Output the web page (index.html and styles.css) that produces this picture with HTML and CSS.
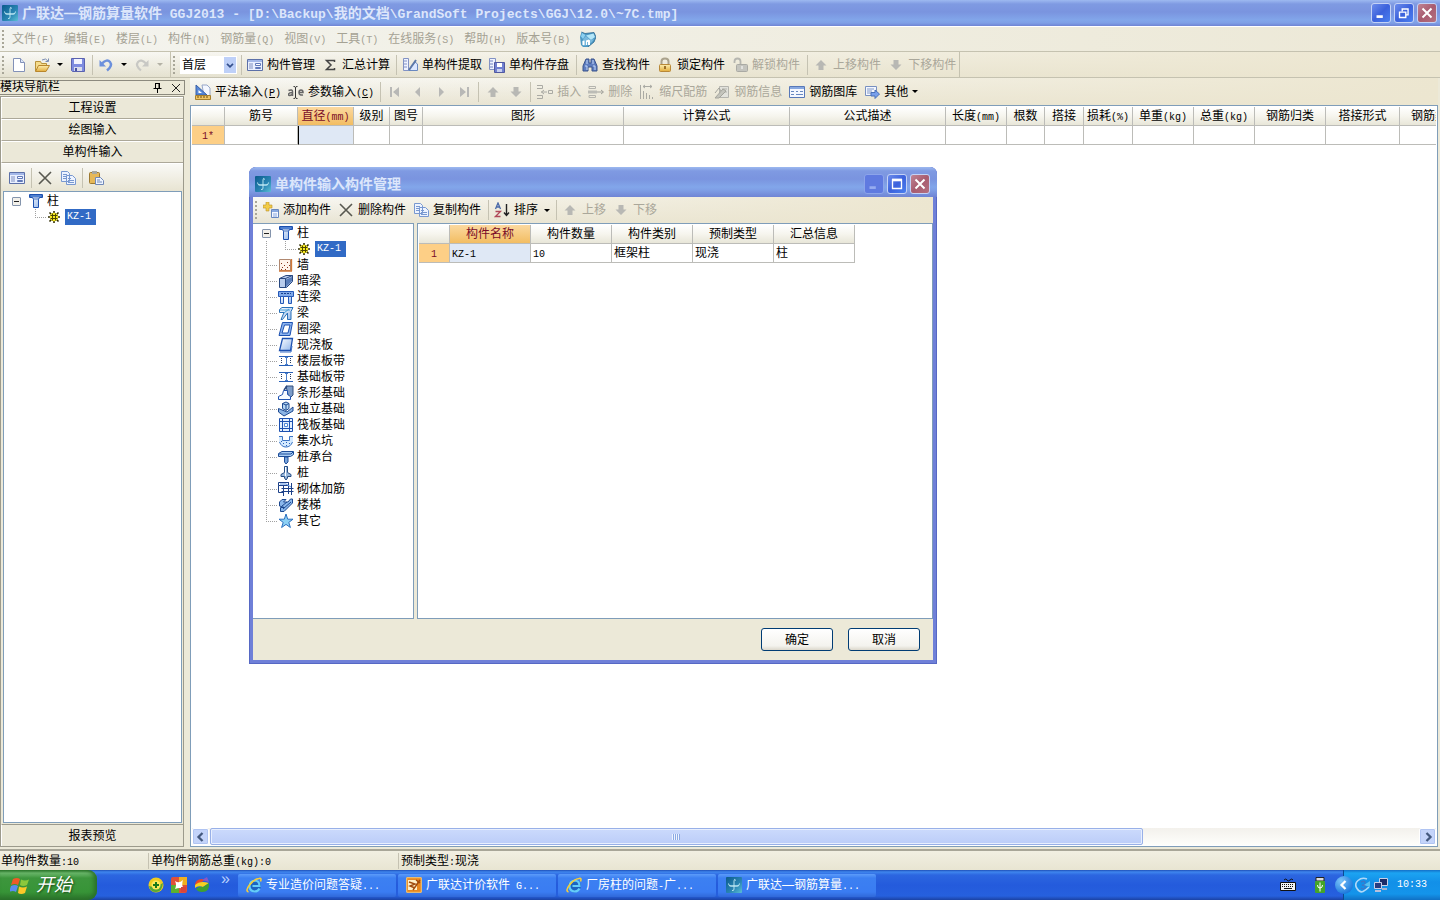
FILE: index.html
```html
<!DOCTYPE html>
<html lang="zh-CN">
<head>
<meta charset="utf-8">
<title>广联达—钢筋算量软件 GGJ2013</title>
<link rel="stylesheet" href="styles.css">
</head>
<body>
<svg class="defs" aria-hidden="true">
<defs>
<linearGradient id="gb" x1="0" y1="0" x2="1" y2="1"><stop offset="0" stop-color="#fff"/><stop offset="1" stop-color="#8fb4ea"/></linearGradient>
<linearGradient id="gy" x1="0" y1="0" x2="0" y2="1"><stop offset="0" stop-color="#fdeeb0"/><stop offset="1" stop-color="#e2ac3c"/></linearGradient>
<linearGradient id="gc" x1="0" y1="0" x2="1" y2="1"><stop offset="0" stop-color="#0a5a8c"/><stop offset=".6" stop-color="#2a86b4"/><stop offset="1" stop-color="#5cc0d4"/></linearGradient>
</defs>
<symbol id="logo" viewBox="0 0 16 16"><rect width="16" height="16" rx="1" fill="url(#gc)"/><path d="M10 3.500Q8 1 8 4v8q0 2-2 1.500M2.500 6.500Q2.500 9 5 9h6q2.500 0 2.500-2.500M3.500 9h9" fill="none" stroke="#c4ecf6" stroke-width=".9"/></symbol>
<symbol id="new" viewBox="0 0 16 16"><path d="M2.500 1.500h7l4 4v9h-11z" fill="#fff" stroke="#8291b8"/><path d="M9.500 1.500v4h4" fill="#dce6f8" stroke="#8291b8"/></symbol>
<symbol id="open" viewBox="0 0 16 16"><path d="M1.500 14V4.500h5l1 2h5V9" fill="#f5dc8c" stroke="#b8923c"/><path d="M1.500 14.500 4.500 8.500h11l-3.500 6z" fill="url(#gy)" stroke="#b8862c"/><path d="M8 3q4-2.500 6 1M14.500 1.500v3h-3" fill="none" stroke="#7c8eb4"/></symbol>
<symbol id="save" viewBox="0 0 16 16"><path d="M1.500 1.500h13v13h-12l-1-1z" fill="#7e8ce0" stroke="#5a62b0"/><path d="M4 2h8v5H4z" fill="#f2f4ff"/><path d="M4 10h8v4H4z" fill="#d9dcec"/><path d="M5 11h2v3H5z" fill="#4a54a4"/></symbol>
<symbol id="undo" viewBox="0 0 16 16"><path d="M4 6.500Q9 1.500 12 5t-3 8.500" fill="none" stroke="#6c90dc" stroke-width="2.500"/><path d="M1.500 3v6.500H8z" fill="#6c90dc"/></symbol>
<symbol id="redo" viewBox="0 0 16 16"><path d="M12 6.500Q7 1.500 4 5t3 8.500" fill="none" stroke="#c8c8c4" stroke-width="2.200"/><path d="M14.500 3v6.500H8z" fill="#c8c8c4"/></symbol>
<symbol id="form" viewBox="0 0 16 16"><path d="M.5 2.500h15v11H.5z" fill="#eaf0ff" stroke="#5c70a8"/><path d="M1 3h14v2H1z" fill="#a4b8e8"/><path d="M2 7h4M2 9h4M2 11h4" stroke="#8090c0"/><path d="M8.500 6.500h5v2h-5zM8.500 10.500h5v1h-5z" fill="#fff" stroke="#6078b8"/></symbol>
<symbol id="sigma" viewBox="0 0 16 16"><path d="M12.500 5V3.500h-8L9 8l-4.500 4.500h8V11" fill="none" stroke="#444" stroke-width="1.500"/></symbol>
<symbol id="extract" viewBox="0 0 16 16"><path d="M1.500 1.500h5v12h-5z" fill="#eef2ff" stroke="#8292c4"/><path d="M2 4h3M2 7h3M2 10h3" stroke="#8292c4"/><path d="M6.500 13.500 13 5l2.500 2v6.500z" fill="#dce8ff" stroke="#6888c0"/><path d="m7 13 7-10" stroke="#5c78a8" stroke-width="2"/></symbol>
<symbol id="store" viewBox="0 0 16 16"><path d="M.5 1.500h6v11h-6z" fill="#eef2ff" stroke="#8292c4"/><path d="M1 4h3M1 7h3M1 10h3" stroke="#6c80c0"/><path d="M5.500 5.500h10v10h-10z" fill="#7080d0" stroke="#5058a0"/><path d="M8 6h5v4H8z" fill="#fff"/><path d="M8 12h5v3H8z" fill="#c8d0f0"/></symbol>
<symbol id="find" viewBox="0 0 16 16"><path d="M4 2h3v4h2V2h3l3 7v5h-5v-4H6v4H1V9z" fill="#5f7ec0" stroke="#38528c"/><path d="M3 9h2v4M11 9h2v4M5 3v4M11 3v4" fill="none" stroke="#c4d8f8"/></symbol>
<symbol id="lock" viewBox="0 0 16 16"><path d="M4.500 8V4.500q0-3 3.500-3t3.500 3V8" fill="none" stroke="#aaa28c" stroke-width="2"/><rect x="2.500" y="7.500" width="11" height="7" rx="1" fill="url(#gy)" stroke="#b88838"/><path d="M8 9v3" stroke="#80500c" stroke-width="1.500"/></symbol>
<symbol id="unlock" viewBox="0 0 16 16"><path d="M2.500 6V4.500q0-3 3-3t3 3V8" fill="none" stroke="#b6b6b0" stroke-width="1.800"/><rect x="4.500" y="7.500" width="11" height="7" rx="1" fill="#c4c4be" stroke="#aaaaa4"/><path d="M10 9v3" stroke="#fff"/></symbol>
<symbol id="up" viewBox="0 0 16 16"><path d="M8 3 2.500 8.500h3V13h5V8.500h3z" fill="#b8b8b4"/></symbol>
<symbol id="down" viewBox="0 0 16 16"><path d="M8 13 2.500 7.500h3V3h5v4.500h3z" fill="#b8b8b4"/></symbol>
<symbol id="house" viewBox="0 0 16 16"><path d="M0 6 1.500 1 5 2.500 14 1.500 16 6l-2 5-6 5H3l-2-2z" fill="#4c98c4"/><path d="M1 5.500 2 2l3.500 2L3 8z" fill="#8cd0f0"/><path d="M6 4.500 13.500 2.500 15 6l-4 3z" fill="#b4e6f8"/><path d="m4 7 2-2 4 4 4-1-2 3-4 3-5 1-1-4z" fill="#78b8dc"/><path d="M2.500 10 4.500 9.500V14H2.500zM6 9.500l3-1 1 1V14H8v-3H7v3H6z" fill="#fff"/><path d="M1.500 1 5 2.500 14 1.500 16 6l-2 5-6 5" fill="none" stroke="#2c6890" stroke-width=".8"/></symbol>
<symbol id="tri" viewBox="0 0 16 16"><path d="M7 1h5l3 3v8H9z" fill="#f4f7ff" stroke="#96a6c8"/><path d="M1 1v10h11z" fill="#5888d8" stroke="#3860a8"/><path d="m3.500 6 3.500 3H3.500z" fill="#fff"/><path d="M.5 11.500h15v4H.5z" fill="#f0c464" stroke="#a8802c"/><path d="M3 12v2M6 12v2M9 12v2M12 12v2" stroke="#705010"/></symbol>
<symbol id="param" viewBox="0 0 16 16"><path d="M.5 6.500q4-1.500 4 1V12M4.500 8.500q-4 0-4 2t4 0M11 8.500h4q0-2.500-2-2.500t-2 2.500q0 3 4 2.500" fill="none" stroke="#666" stroke-width="1.500"/><path d="M5.500 2.500q2 0 2 1v10q0 1-2 1M9.500 2.500q-2 0-2 1v10q0 1 2 1" fill="none" stroke="#333"/></symbol>
<symbol id="first" viewBox="0 0 16 16"><path d="M3 3h2v10H3zM12 3v10L6 8z" fill="#b8b8b6"/></symbol>
<symbol id="prev" viewBox="0 0 16 16"><path d="M10 3v10L5 8z" fill="#b8b8b6"/></symbol>
<symbol id="next" viewBox="0 0 16 16"><path d="M6 3v10l5-5z" fill="#b8b8b6"/></symbol>
<symbol id="last" viewBox="0 0 16 16"><path d="M11 3h2v10h-2zM4 3v10l6-5z" fill="#b8b8b6"/></symbol>
<symbol id="insert" viewBox="0 0 16 16"><path d="M0 1.500h5.500v3H0M0 11.500h5.500v3H0M10 8H4M11.500 6.500h4v3h-4zM7 6 4.500 8 7 10" fill="none" stroke="#aaaaa4"/></symbol>
<symbol id="remove" viewBox="0 0 16 16"><path d="M1 2.500h6.500v2H1zM1 11.500h6.500v2H1z" fill="none" stroke="#b4b4ae"/><path d="M0 6.500h9v3H0z" fill="#bcbcb6"/><path d="M9 8h6M13 6l2.500 2L13 10" fill="none" stroke="#a0a09a"/></symbol>
<symbol id="scale" viewBox="0 0 16 16"><path d="M1.500 1v14M4 2.500h9M6 1 4 2.500 6 4M11 1l2 1.500L11 4M4.500 7v8M7.500 9v6M10.500 11v4M13.500 13v2" fill="none" stroke="#aaaaa4"/></symbol>
<symbol id="info" viewBox="0 0 16 16"><path d="M5.500 2.500h9v11h-9zM8 5h5M8 8h5" fill="#e2e2dc" stroke="#b4b4ae"/><path d="m1 14 8-9 3 2-7 7z" fill="#c4c4bc" stroke="#a4a49c"/><path d="m1 9 4-5 2 3" fill="none" stroke="#a4a49c"/></symbol>
<symbol id="lib" viewBox="0 0 16 16"><path d="M.5 2.500h15v11H.5z" fill="#f4f7ff" stroke="#5878b8"/><path d="M1 3h14v2H1z" fill="#88a8e0"/><path d="M2 7.500h3M2 10.500h3M7 7.500h2M11 7.500h3M7 10.500h7" stroke="#6888c0"/></symbol>
<symbol id="other" viewBox="0 0 16 16"><path d="M1.500 2.500h11v9h-11z" fill="#f4f7ff" stroke="#7890c0"/><path d="M3 5h7M3 7h5M3 9h4" stroke="#8098c8"/><path d="M7 8.500h4V6l4.500 4-4.500 4.500V12H7z" fill="#78a0ec" stroke="#4870b8"/></symbol>
<symbol id="cross" viewBox="0 0 16 16"><path d="m2 2 12 12M14 2 2 14" stroke="#585850" stroke-width="1.600"/></symbol>
<symbol id="copy" viewBox="0 0 16 16"><path d="M1.500 1.500h6l2 2v8h-8zM6.500 5.500h6l3 3v6h-9z" fill="#edf3ff" stroke="#7898d0"/><path d="M3 4.500h4M3 6.500h3M3 8.500h3M8 8.500h3M8 10.500h6M8 12.500h6" stroke="#7898d0"/></symbol>
<symbol id="paste" viewBox="0 0 16 16"><rect x="1.500" y="2.500" width="10" height="11" rx="1" fill="#e6b858" stroke="#9c7830"/><path d="M4 1h5v3H4z" fill="#a8a8a0"/><path d="M7.500 7.500h5l3 3v4h-8z" fill="#eef4ff" stroke="#7088b8"/><path d="M9 10h3M9 12h5" stroke="#7088b8"/></symbol>
<symbol id="add" viewBox="0 0 16 16"><path d="M3 0h3v3h3v3H6v3H3V6H0V3h3z" fill="#f2cc48" stroke="#b8902c" stroke-width=".6"/><path d="M8.500 7.500h7v8h-7z" fill="#f4f7ff" stroke="#6888c0"/><path d="M9 8h6v2H9z" fill="#88a8e0"/><path d="M10 12h4M10 14h4" stroke="#88a8e0"/></symbol>
<symbol id="sort" viewBox="0 0 16 16"><path d="m1.500 7 2.500-6 2.500 6M2.500 5h3" fill="none" stroke="#4868a8" stroke-width="1.300"/><path d="M1.500 9.500h5l-5 5h5" fill="none" stroke="#b04858" stroke-width="1.300"/><path d="M12.500 2v11M10 10.500l2.500 3 2.500-3" fill="none" stroke="#222" stroke-width="1.400"/></symbol>
<symbol id="col" viewBox="0 0 16 16"><path d="M1.500 1.500h13v3h-3l-1 2v8h-5v-8l-1-2h-3z" fill="url(#gb)" stroke="#1c50b0"/><path d="M2 2h12v2H2zM5 6h6" fill="#6c9ce4" stroke="#1c50b0" stroke-width=".7"/></symbol>
<symbol id="gear" viewBox="0 0 14 14"><path d="M7 1v12M1 7h12M2.500 2.500l9 9M11.500 2.500l-9 9" stroke="#2c2800" stroke-width="1.600"/><circle cx="7" cy="7" r="4.200" fill="#f8ea20"/><path d="M5.500 3.500v7M8.500 3.500v7M3.500 5.500h7M3.500 8.500h7" stroke="#4c4600"/></symbol>
<symbol id="wall" viewBox="0 0 16 16"><path d="M1.500 2.500h11v11h-11z" fill="#fff4ec" stroke="#b08870"/><path d="M13.500 2v12M1 14h13" stroke="#d07838" stroke-width="1.300"/><path d="M3 6.500h1M6 8.500h1M9 5.500h1M4 10.500h1M9 10.500h1M7 12.500h1M11 8.500h1M3 12.500h1" stroke="#88341c"/></symbol>
<symbol id="hbeam" viewBox="0 0 16 16"><path d="M1.500 5.500 8 2.500h6.500v6l-6 6h-7z" fill="#b8ccec" stroke="#284880"/><path d="M1.500 5.500h6v9M7.500 5.500l7-3" fill="none" stroke="#284880"/><path d="M8 6.500 14 4v4l-6 6z" fill="#587cb8"/></symbol>
<symbol id="lbeam" viewBox="0 0 16 16"><path d="M.5 2.500h15v5H.5z" fill="#80a8e8" stroke="#2458b8"/><path d="M3 4.500h10" stroke="#18408c" stroke-dasharray="2 1"/><path d="M2.500 7.500h3v7h-3zM10.500 7.500h3v7h-3z" fill="url(#gb)" stroke="#2458b8"/></symbol>
<symbol id="beam" viewBox="0 0 16 16"><path d="M1.500 4.500 4 2.500h11l-2 4v8H9.500V8l-5 6.500H3l3-7H1.500z" fill="url(#gb)" stroke="#2870b8"/><path d="M2 5h10M6 8l5-4" stroke="#48a0d8"/></symbol>
<symbol id="ring" viewBox="0 0 16 16"><path d="M4.500 1.500h10l-2.500 13H1z" fill="#8cb4f0" stroke="#1c50b0"/><path d="M6.500 4h5.500l-2 8H4z" fill="#fff" stroke="#1c50b0"/></symbol>
<symbol id="slab" viewBox="0 0 16 16"><path d="M4.500 1.500h10l-2 12H1.500z" fill="url(#gb)" stroke="#1c50b0" stroke-width="1.300"/><path d="M2 15h11l1-6" fill="none" stroke="#3c70c8"/></symbol>
<symbol id="band" viewBox="0 0 16 16"><path d="M1 3.500h14M1 12.500h14" stroke="#2860b8"/><path d="M3.500 5v6M12.500 5v6" stroke="#283c60" stroke-dasharray="1 1"/><path d="M7 4.500h3M7 11.500h3M8.500 5v6" stroke="#487cc8"/></symbol>
<symbol id="strip" viewBox="0 0 16 16"><path d="M8 1h7v9l-4 4z" fill="#7c9cc8" stroke="#34507c"/><path d="M5.500 5.500h4v4l3 2v3H.5v-3l4-2z" fill="#f4f9ff" stroke="#1c50b0"/><path d="M6 5 9 1" stroke="#284880" stroke-width="1.500"/></symbol>
<symbol id="pad" viewBox="0 0 16 16"><path d="M.5 7.500 9 11l6-5v4l-9 5-5.500-4z" fill="#8cb4e4" stroke="#1c4890"/><path d="M4.500 2.500 8 1l3 1.500v5l-3 2-3.500-2z" fill="#b8d8f4" stroke="#1c4890"/><path d="M8 4v5M4.500 2.500 8 4l3-1.500" fill="none" stroke="#1c4890"/></symbol>
<symbol id="raft" viewBox="0 0 16 16"><path d="M1.500 1.500h13v13h-13z" fill="#e4f0fe" stroke="#1c50b0"/><path d="M4.500 2v12M11.500 2v12M2 4.500h12M2 11.500h12" stroke="#1c50b0"/><path d="M6.500 6.500h3v3h-3z" fill="#fff" stroke="#5088d8"/></symbol>
<symbol id="pit" viewBox="0 0 16 16"><path d="M1 3.500h3.500v4h7v-4H15v5q-2 6-7 6t-7-6z" fill="#d4eaff"/><path d="M1 3.500h3.500v4h7v-4H15M1.500 9q2 5 6.500 5t6.500-5" fill="none" stroke="#3c74c4"/><path d="M3 8.500h1M5 10.500h1M8 9.500h1M11 10.500h1M8 12.500h1" stroke="#2860b8"/></symbol>
<symbol id="cap" viewBox="0 0 16 16"><path d="M.5 4.500 4 2.500h11.500v3l-3 2H.5z" fill="#a8ccf4" stroke="#1c4c98"/><path d="M6.500 8h3.500v5L8 15l-1.500-2z" fill="#78a4dc" stroke="#1c4c98"/><path d="M1 5h12l2-2" fill="none" stroke="#1c4c98"/></symbol>
<symbol id="pile" viewBox="0 0 16 16"><path d="M6.500 1.500h3v6l3.500 2v2H9.500V13L8 15l-1.500-2v-1.500H3v-2l3.500-2z" fill="#98b8dc" stroke="#244c84"/><path d="M7.500 2v9" stroke="#fff"/></symbol>
<symbol id="rebar" viewBox="0 0 16 16"><path d="M.5 1.500h10v3h-10zM.5 4.500v7h5M3.500 7.500h12M3.500 10.500h12M5.500 4v11M10.500 1v12M13.500 2v12" fill="none" stroke="#1c4088"/><path d="M2 3h6l5 3" fill="none" stroke="#5890e0"/></symbol>
<symbol id="stair" viewBox="0 0 16 16"><path d="M1.500 5 4 2.500h4L5.500 5H10l2.500-3h2v4L6 14.500H2.500v-4h4L1.500 9z" fill="#8cb8ec" stroke="#1c4890"/><path d="m4 9 5-4M5 12l8-7" stroke="#1c4890"/></symbol>
<symbol id="star" viewBox="0 0 16 16"><path d="m8 1 1.700 5.200H15l-4.200 3.200 1.600 5.100L8 11.400l-4.400 3.100 1.600-5.100L1 6.200h5.300z" fill="#8cd0f4" stroke="#2c70c0"/></symbol>
<symbol id="ie" viewBox="0 0 16 16"><circle cx="8.500" cy="9" r="6.500" fill="#1c64c0"/><path d="M13.500 11.500Q12 14.500 8.500 14.500 3.500 14 3.500 9t5-5.500q5 0 5 5.500H6.500" fill="none" stroke="#64ccf8" stroke-width="2.200"/><path d="M2.500 15Q-1 14 3.500 8T13 1.500q3-1 1.500 3" fill="none" stroke="#f4cc3c" stroke-width="1.600"/></symbol>
<symbol id="pricing" viewBox="0 0 16 16"><path d="M.7.700h14.600v14.600H.7z" fill="#e88820" stroke="#ffc868"/><path d="M2 3h9v10H2z" fill="#fff0c8"/><path d="m3 5 6 2-5 2 5 2M14 3 7 13M10 3l4 3" fill="none" stroke="#a04c10" stroke-width="1.400"/></symbol>
<symbol id="flag" viewBox="0 0 20 20"><path d="M3 4q4-2 7 0L8 10q-3-2-7 0z" fill="#ee5a28"/><path d="M11 4.500q4 2 8 0L17 10q-4 2-7 0z" fill="#8cc83c"/><path d="M1 11q4-2 7 0l-2 6q-3-2-7 0z" fill="#5a8cf0"/><path d="M9 11.500q4 2 8 0L15 18q-4 2-7 0z" fill="#fcc828"/></symbol>
<symbol id="q1" viewBox="0 0 16 16"><circle cx="8" cy="8" r="7.500" fill="#f0cc20"/><path d="M1 9q7 2 14-3-1 9-7 9t-7-6" fill="#58a838"/><circle cx="8" cy="8" r="4.500" fill="#fce858"/><path d="M8 5v6M5 8h6" stroke="#187818" stroke-width="2"/></symbol>
<symbol id="q2" viewBox="0 0 16 16"><rect width="16" height="16" rx="2" fill="#e05038"/><path d="M8 0h8v8H8z" fill="#f0b020"/><path d="M0 8h8v8H0z" fill="#5cb030"/><path d="M4 4q4 3 8-1-2 5 1 9-4-2-9 0 2-4 0-8" fill="#fff"/><path d="M10 10h5v5h-5z" fill="#d8443c"/></symbol>
<symbol id="q3" viewBox="0 0 16 16"><path d="M1 9q0-7 7-7l3 1z" fill="#e84828"/><path d="M1 8q5-5 14-2l-6 4q-5-2-8 1z" fill="#f8d020"/><path d="M2 12q3-3 7-2l6-4q1 9-7 9-4 0-6-3" fill="#40a030"/><path d="m8 3 5-3 2 5z" fill="#8858c8"/></symbol>
<symbol id="kbd" viewBox="0 0 16 16"><path d="M4 3q2-2 3 0t3 0 3 0" fill="none" stroke="#111"/><path d="M.5 5.500h15v8H.5z" fill="#f4f4f4" stroke="#111"/><path d="M2 7.500h12M2 9.500h12" stroke="#111" stroke-dasharray="1 1"/><path d="M4 11.500h8" stroke="#111"/></symbol>
<symbol id="usb" viewBox="0 0 16 16"><path d="M4 .5h8V4H4z" fill="#ddd" stroke="#222"/><rect x="3" y="4" width="10" height="12" rx="1" fill="#44a428"/><path d="M8 5.500v9M5.500 8q0 3 2.500 3t2.500-3" fill="none" stroke="#fff"/></symbol>
<symbol id="swirl" viewBox="0 0 16 16"><path d="M12 2Q7 0 3 3.500t-1 8 6 3 6-4.500" fill="none" stroke="#b0d8f8" stroke-width="1.600"/><path d="M6 5q4-2 4 1t-3 2q4 0 3 2.500T6 11" fill="none" stroke="#3c78c8" stroke-width="1.400"/><path d="m9 8 6-4v6z" fill="#58c0f0"/></symbol>
<symbol id="net" viewBox="0 0 16 16"><path d="M6.500 1.500h8v7h-8z" fill="#1c2c68" stroke="#c8d0e8"/><path d="M9 11h5v2H9z" fill="#a8b4d0"/><path d="M1.500 5.500h7v6h-7z" fill="#283c80" stroke="#c8d0e8"/><path d="M2 13h6v2H2z" fill="#b8c0dc"/></symbol>
<symbol id="chevl" viewBox="0 0 16 16"><path d="m9.500 4-4 4 4 4" fill="none" stroke="currentColor" stroke-width="2.300"/></symbol>
<symbol id="chevr" viewBox="0 0 16 16"><path d="m6.500 4 4 4-4 4" fill="none" stroke="currentColor" stroke-width="2.300"/></symbol>
<symbol id="min" viewBox="0 0 20 20"><path d="M5 14h7" stroke="currentColor" stroke-width="3"/></symbol>
<symbol id="restore" viewBox="0 0 20 20"><path d="M8 8V5.500h6.500V12H12M8 5.500h7M5 9h7v6H5zM5 9h7" fill="none" stroke="#fff" stroke-width="1.500"/></symbol>
<symbol id="max" viewBox="0 0 20 20"><path d="M5 5.500h10V15H5z" fill="none" stroke="#fff" stroke-width="1.500"/><path d="M4.500 5.500h11" stroke="#fff" stroke-width="3"/></symbol>
<symbol id="close" viewBox="0 0 20 20"><path d="m5 5 10 10M15 5 5 15" stroke="#fff" stroke-width="2.200"/></symbol>
<symbol id="pin" viewBox="0 0 12 12"><path d="M3.500 1v5.500M3 1.500h5M1.500 6.500h8M5.500 7v4M7 1v6" fill="none" stroke="#000"/><path d="M7.500 1v6" stroke="#000"/></symbol>
<symbol id="thinx" viewBox="0 0 12 12"><path d="m2 2 8 8M10 2l-8 8" stroke="#222"/></symbol>
</svg>

<header class="titlebar">
  <svg class="i"><use href="#logo"/></svg>
  <h1 class="title">广联达—钢筋算量软件<span class="l"> GGJ2013 - [D:\Backup\</span>我的文档<span class="l">\GrandSoft Projects\GGJ\12.0\~7C.tmp]</span></h1>
  <div class="winbtns">
    <button class="wb" aria-label="最小化"><svg><use href="#min"/></svg></button>
    <button class="wb" aria-label="还原"><svg><use href="#restore"/></svg></button>
    <button class="wb wb-close" aria-label="关闭"><svg><use href="#close"/></svg></button>
  </div>
</header>

<nav class="menubar">
  <span class="grip"></span>
  <button>文件<span class="l">(F)</span></button><button>编辑<span class="l">(E)</span></button><button>楼层<span class="l">(L)</span></button><button>构件<span class="l">(N)</span></button><button>钢筋量<span class="l">(Q)</span></button><button>视图<span class="l">(V)</span></button><button>工具<span class="l">(T)</span></button><button>在线服务<span class="l">(S)</span></button><button>帮助<span class="l">(H)</span></button><button>版本号<span class="l">(B)</span></button>
  <svg class="i"><use href="#house"/></svg>
</nav>

<div class="toolbar maintools">
  <div class="band files">
    <span class="grip"></span>
    <button class="tb" aria-label="新建"><svg class="i"><use href="#new"/></svg></button>
    <button class="tb" aria-label="打开"><svg class="i"><use href="#open"/></svg><span class="caret"></span></button>
    <button class="tb" aria-label="保存"><svg class="i"><use href="#save"/></svg></button>
    <span class="sep"></span>
    <button class="tb" aria-label="撤销"><svg class="i"><use href="#undo"/></svg><span class="caret"></span></button>
    <button class="tb off" aria-label="恢复"><svg class="i"><use href="#redo"/></svg><span class="caret"></span></button>
  </div>
  <div class="band">
    <span class="grip"></span>
    <span class="combo"><select aria-label="楼层"><option>首层</option></select><span class="drop"><svg><use href="#chevr"/></svg></span></span>
    <span class="sep"></span>
    <button class="tb"><svg class="i"><use href="#form"/></svg>构件管理</button>
    <button class="tb"><svg class="i"><use href="#sigma"/></svg>汇总计算</button>
    <span class="sep"></span>
    <button class="tb"><svg class="i"><use href="#extract"/></svg>单构件提取</button>
    <button class="tb"><svg class="i"><use href="#store"/></svg>单构件存盘</button>
    <span class="sep wide"></span>
    <button class="tb"><svg class="i"><use href="#find"/></svg>查找构件</button>
    <button class="tb"><svg class="i"><use href="#lock"/></svg>锁定构件</button>
    <button class="tb off"><svg class="i"><use href="#unlock"/></svg>解锁构件</button>
    <span class="sep wide"></span>
    <button class="tb off"><svg class="i"><use href="#up"/></svg>上移构件</button>
    <button class="tb off"><svg class="i"><use href="#down"/></svg>下移构件</button>
  </div>
</div>

<main class="main">
  <aside class="side">
    <div class="side-head"><h2>模块导航栏</h2><button aria-label="固定"><svg><use href="#pin"/></svg></button><button aria-label="关闭导航栏"><svg><use href="#thinx"/></svg></button></div>
    <div class="side-box">
      <button class="navbtn">工程设置</button>
      <button class="navbtn">绘图输入</button>
      <button class="navbtn">单构件输入</button>
      <div class="toolbar side-tools">
        <button class="tb" aria-label="构件管理"><svg class="i"><use href="#form"/></svg></button>
        <span class="sep"></span>
        <button class="tb" aria-label="删除"><svg class="i"><use href="#cross"/></svg></button>
        <button class="tb" aria-label="复制"><svg class="i"><use href="#copy"/></svg></button>
        <span class="sep"></span>
        <button class="tb" aria-label="粘贴"><svg class="i"><use href="#paste"/></svg></button>
      </div>
      <ul class="tree side-tree">
        <li><span class="exp"></span><svg class="i"><use href="#col"/></svg>柱</li>
        <li class="sub"><span class="elbow"></span><svg class="i"><use href="#gear"/></svg><span class="sel l">KZ-1</span></li>
      </ul>
      <button class="navbtn navlast">报表预览</button>
    </div>
  </aside>

  <section class="work">
    <div class="toolbar worktools">
      <button class="tb"><svg class="i"><use href="#tri"/></svg><span>平法输入<span class="l">(<u>P</u>)</span></span></button>
      <button class="tb"><svg class="i"><use href="#param"/></svg><span>参数输入<span class="l">(<u>C</u>)</span></span></button>
      <span class="sep"></span>
      <button class="tb off" aria-label="首条"><svg class="i"><use href="#first"/></svg></button>
      <button class="tb off" aria-label="上一条"><svg class="i"><use href="#prev"/></svg></button>
      <button class="tb off" aria-label="下一条"><svg class="i"><use href="#next"/></svg></button>
      <button class="tb off" aria-label="末条"><svg class="i"><use href="#last"/></svg></button>
      <span class="sep"></span>
      <button class="tb off" aria-label="上移"><svg class="i"><use href="#up"/></svg></button>
      <button class="tb off" aria-label="下移"><svg class="i"><use href="#down"/></svg></button>
      <span class="sep"></span>
      <button class="tb off"><svg class="i"><use href="#insert"/></svg>插入</button>
      <button class="tb off"><svg class="i"><use href="#remove"/></svg>删除</button>
      <button class="tb off"><svg class="i"><use href="#scale"/></svg>缩尺配筋</button>
      <button class="tb off"><svg class="i"><use href="#info"/></svg>钢筋信息</button>
      <button class="tb"><svg class="i"><use href="#lib"/></svg>钢筋图库</button>
      <button class="tb"><svg class="i"><use href="#other"/></svg>其他<span class="caret near"></span></button>
    </div>
    <div class="sheet">
      <div class="sheet-view">
        <table class="grid maingrid">
          <colgroup><col class="w33"><col class="w73"><col class="w56"><col class="w36"><col class="w33"><col class="w201"><col class="w166"><col class="w156"><col class="w61"><col class="w38"><col class="w39"><col class="w49"><col class="w61"><col class="w61"><col class="w71"><col class="w74"><col class="w71"></colgroup>
          <thead><tr><th></th><th>筋号</th><th class="hot">直径<span class="l">(mm)</span></th><th>级别</th><th>图号</th><th>图形</th><th>计算公式</th><th>公式描述</th><th>长度<span class="l">(mm)</span></th><th>根数</th><th>搭接</th><th>损耗<span class="l">(%)</span></th><th>单重<span class="l">(kg)</span></th><th>总重<span class="l">(kg)</span></th><th>钢筋归类</th><th>搭接形式</th><th>钢筋类型</th></tr></thead>
          <tbody><tr><th class="rowno"><span class="l">1*</span></th><td></td><td class="cur caretcell"></td><td></td><td></td><td></td><td></td><td></td><td></td><td></td><td></td><td></td><td></td><td></td><td></td><td></td><td></td></tr></tbody>
        </table>
      </div>
      <div class="hscroll">
        <button class="sbtn" aria-label="向左滚动"><svg class="i"><use href="#chevl"/></svg></button>
        <div class="track"><div class="thumb"><span class="ridges"></span></div></div>
        <button class="sbtn" aria-label="向右滚动"><svg class="i"><use href="#chevr"/></svg></button>
      </div>
    </div>
  </section>
</main>

<footer class="status">
  <span class="st1">单构件数量<span class="l">:10</span></span>
  <span class="st2">单构件钢筋总重<span class="l">(kg):0</span></span>
  <span class="st3">预制类型<span class="l">:</span>现浇</span>
</footer>

<div class="taskbar">
  <button class="start"><svg><use href="#flag"/></svg>开始</button>
  <div class="quick">
    <svg class="i"><use href="#q1"/></svg><svg class="i"><use href="#q2"/></svg><svg class="i"><use href="#q3"/></svg><span class="more">»</span>
  </div>
  <div class="tasks">
    <button class="task"><svg class="i"><use href="#ie"/></svg><span>专业造价问题答疑<span class="l">...</span></span></button>
    <button class="task"><svg class="i"><use href="#pricing"/></svg><span>广联达计价软件<span class="l"> G...</span></span></button>
    <button class="task"><svg class="i"><use href="#ie"/></svg><span>厂房柱的问题<span class="l">-</span>广<span class="l">...</span></span></button>
    <button class="task"><svg class="i"><use href="#logo"/></svg><span>广联达—钢筋算量<span class="l">...</span></span></button>
  </div>
  <div class="lang"><svg class="i"><use href="#kbd"/></svg><svg class="i"><use href="#usb"/></svg></div>
  <div class="tray">
    <button class="hide" aria-label="隐藏图标"><svg class="i"><use href="#chevl"/></svg></button>
    <svg class="i"><use href="#swirl"/></svg><svg class="i"><use href="#net"/></svg>
    <time class="l">10:33</time>
  </div>
</div>

<section class="dialog" role="dialog" aria-labelledby="dt">
  <div class="dlg-title">
    <svg class="i"><use href="#logo"/></svg><h2 id="dt" class="title">单构件输入构件管理</h2>
    <div class="winbtns">
      <button class="wb wb-off" aria-label="最小化"><svg><use href="#min"/></svg></button>
      <button class="wb" aria-label="最大化"><svg><use href="#max"/></svg></button>
      <button class="wb wb-close" aria-label="关闭"><svg><use href="#close"/></svg></button>
    </div>
  </div>
  <div class="dlg-body">
    <div class="toolbar dlg-tools">
      <span class="grip"></span>
      <button class="tb"><svg class="i"><use href="#add"/></svg>添加构件</button>
      <button class="tb"><svg class="i"><use href="#cross"/></svg>删除构件</button>
      <button class="tb"><svg class="i"><use href="#copy"/></svg>复制构件</button>
      <span class="sep wide"></span>
      <button class="tb"><svg class="i"><use href="#sort"/></svg>排序<span class="caret"></span></button>
      <span class="sep"></span>
      <button class="tb off"><svg class="i"><use href="#up"/></svg>上移</button>
      <button class="tb off"><svg class="i"><use href="#down"/></svg>下移</button>
    </div>
    <div class="panes">
      <ul class="tree dlg-tree">
        <li><span class="exp"></span><svg class="i"><use href="#col"/></svg>柱</li>
        <li class="sub"><span class="trunk"></span><span class="elbow"></span><svg class="i"><use href="#gear"/></svg><span class="sel l">KZ-1</span></li>
        <li><span class="branch"></span><svg class="i"><use href="#wall"/></svg>墙</li>
        <li><span class="branch"></span><svg class="i"><use href="#hbeam"/></svg>暗梁</li>
        <li><span class="branch"></span><svg class="i"><use href="#lbeam"/></svg>连梁</li>
        <li><span class="branch"></span><svg class="i"><use href="#beam"/></svg>梁</li>
        <li><span class="branch"></span><svg class="i"><use href="#ring"/></svg>圈梁</li>
        <li><span class="branch"></span><svg class="i"><use href="#slab"/></svg>现浇板</li>
        <li><span class="branch"></span><svg class="i"><use href="#band"/></svg>楼层板带</li>
        <li><span class="branch"></span><svg class="i"><use href="#band"/></svg>基础板带</li>
        <li><span class="branch"></span><svg class="i"><use href="#strip"/></svg>条形基础</li>
        <li><span class="branch"></span><svg class="i"><use href="#pad"/></svg>独立基础</li>
        <li><span class="branch"></span><svg class="i"><use href="#raft"/></svg>筏板基础</li>
        <li><span class="branch"></span><svg class="i"><use href="#pit"/></svg>集水坑</li>
        <li><span class="branch"></span><svg class="i"><use href="#cap"/></svg>桩承台</li>
        <li><span class="branch"></span><svg class="i"><use href="#pile"/></svg>桩</li>
        <li><span class="branch"></span><svg class="i"><use href="#rebar"/></svg>砌体加筋</li>
        <li><span class="branch"></span><svg class="i"><use href="#stair"/></svg>楼梯</li>
        <li><span class="branch end"></span><svg class="i"><use href="#star"/></svg>其它</li>
      </ul>
      <div class="dlg-sheet">
        <table class="grid dlggrid">
          <colgroup><col class="w31"><col class="w81"><col class="w81"><col class="w81"><col class="w81"><col class="w81"></colgroup>
          <thead><tr><th></th><th class="hot">构件名称</th><th>构件数量</th><th>构件类别</th><th>预制类型</th><th>汇总信息</th></tr></thead>
          <tbody><tr><th class="rowno"><span class="l">1</span></th><td class="cur"><span class="l">KZ-1</span></td><td><span class="l">10</span></td><td>框架柱</td><td>现浇</td><td>柱</td></tr></tbody>
        </table>
      </div>
    </div>
    <div class="dlg-foot"><button class="push">确定</button><button class="push">取消</button></div>
  </div>
</section>
</body>
</html>
```
FILE: styles.css
```css
* { box-sizing: border-box; }
body {
  margin: 0; height: 100vh; display: flex; flex-direction: column; position: relative; overflow: hidden;
  background: #ece9d8; color: #000;
  font: 12px/16px "Liberation Sans", "Noto Sans CJK SC", sans-serif;
}
button { font: inherit; color: inherit; background: none; border: 0; padding: 0; margin: 0; white-space: nowrap; }
h1, h2, ul { margin: 0; padding: 0; font: inherit; list-style: none; }
svg { display: block; flex: none; }
.defs { position: absolute; width: 0; height: 0; }
.i { width: 16px; height: 16px; }
.l { font-family: "Liberation Mono", monospace; font-size: 10px; line-height: 10px; white-space: pre; }

/* title bars */
.titlebar, .dlg-title {
  display: flex; align-items: center; flex: none;
  background: linear-gradient(#9db9f0 0, #7f9ae2 4px, #7a94df 12px, #82a6ea 20px, #7f9fe6 23px, #6f84d4 100%);
}
.titlebar { height: 26px; padding: 0 3px 0 2px; }
.title { flex: 1; margin-left: 4px; font-size: 14px; line-height: 20px; font-weight: bold; color: #dce6fb; white-space: nowrap; }
.title .l { font-size: 13px; }
.winbtns { display: flex; gap: 3px; }
.wb { width: 20px; height: 20px; border: 1px solid #c4d2f6; border-radius: 3px; color: #fff; background: linear-gradient(135deg, #6c8cec, #3c62dc 50%, #4a80f0); }
.wb svg { width: 18px; height: 18px; }
.wb-close { background: linear-gradient(135deg, #c08494, #a85c70 50%, #b47080); }
.wb-off { color: #96acf0; border-color: #8ca4ea; background: #5f7ae0; }

/* menu and tool bars */
.grip { width: 2px; height: 18px; flex: none; background: repeating-linear-gradient(#a8a698 0 2px, transparent 2px 4px); }
.menubar {
  height: 26px; flex: none; display: flex; align-items: center; gap: 10px; padding-left: 2px; color: #a5a294;
  border-top: 1px solid #fff; border-bottom: 1px solid #c5c2b0; background: linear-gradient(90deg, #f4f4ef, #ece8d6);
}
.menubar .grip { margin-right: -2px; }
.toolbar { display: flex; align-items: center; flex: none; }
.maintools { height: 26px; border-bottom: 1px solid #c5c2b0; background: linear-gradient(90deg, transparent, #ece6d0), linear-gradient(#f9f9f6, #e4e1d0); }
.band { height: 100%; display: flex; align-items: center; padding-left: 2px; border-right: 1px solid #c5c2b0; }
.files { width: 171px; }
.tb { display: flex; align-items: center; gap: 4px; height: 22px; padding: 0 3px 0 4px; }
.off, .off .l { color: #aaa79a; }
.sep { width: 1px; height: 20px; flex: none; margin: 0 1px 0 3px; background: #c5c2b2; }
.sep.wide { margin: 0 1px 0 4px; }
.caret { border: 3px solid transparent; border-top-color: #000; border-bottom: 0; margin-left: 2px; }
.off .caret { border-top-color: #b4b2a6; }
.caret.near { margin-left: 0; }
.files .grip { margin-right: 3px; }
.files .caret { margin-left: 3px; }
.combo { position: relative; width: 57px; height: 18px; margin: 0 1px 0 5px; }
.combo select { width: 100%; height: 100%; border: 0; padding: 0 2px; appearance: none; background: #fff; font: inherit; line-height: 16px; color: #000; }
.drop { position: absolute; right: 1px; top: 1px; width: 12px; height: 16px; background: #bed0f8; color: #35508c; pointer-events: none; }
.drop svg { width: 12px; height: 16px; transform: rotate(90deg); }

/* main split */
.main { flex: 1; min-height: 0; display: flex; gap: 5px; }
.side { width: 185px; flex: none; display: flex; flex-direction: column; padding-top: 2px; }
.side-head { height: 15px; display: flex; align-items: center; gap: 6px; padding-right: 2px; border: 1px solid #8c8a7e; border-left: 0; }
.side-head h2 { flex: 1; line-height: 13px; }
.side-head svg { width: 12px; height: 12px; }
.side-box { flex: 1; min-height: 0; display: flex; flex-direction: column; margin: 1px 1px 2px 0; border: 1px solid #9c9a8c; }
.navbtn { height: 22px; flex: none; border-bottom: 1px solid #aca899; border-top: 1px solid #fff; border-left: 1px solid #fff; background: #ebe8d8; }
.navlast { border-bottom: 0; border-top-color: #9c9a8c; }
.side-tools { height: 28px; padding-left: 4px; background: linear-gradient(#f9f9f6, #e8e4d2); border-top: 1px solid #fff; }
.side-tools .sep { margin-right: 1px; }
.side-tree { flex: 1; margin: 0 1px 1px 2px; background: #fff; border: 1px solid #7f9db9; padding: 1px 0 0 8px; }
.work { flex: 1; min-width: 0; display: flex; flex-direction: column; background: #ece9d8; padding: 0 2px 2px 0; }
.worktools { height: 27px; padding-left: 1px; background: linear-gradient(90deg, transparent, #ece6d0), linear-gradient(#f9f9f6, #e8e4d4); }
.worktools .sep { margin-right: 2px; }
.sheet { flex: 1; min-height: 0; display: flex; flex-direction: column; background: #fff; border: 1px solid #7f9db9; padding: 1px; }
.sheet-view { flex: 1; overflow: hidden; }

/* grids */
.grid { border-collapse: separate; border-spacing: 0; table-layout: fixed; }
.grid th, .grid td { height: 19px; padding: 0; border-right: 1px solid #bcbcb8; border-bottom: 1px solid #bcbcb8; font-weight: normal; line-height: 16px; white-space: nowrap; overflow: hidden; }
.grid thead th { background: linear-gradient(#fff, #f6f5ee 50%, #e8e6d8); }
.grid td { padding-left: 2px; }
.grid thead .hot { color: #7a0c28; background: linear-gradient(#fbd9a0, #f2bd62); }
.grid .rowno { color: #7a0c28; background: #fdcf86; }
.grid .cur { background: #dfe8f5; }
.grid .caretcell { border-left: 1px solid #000; }
.maingrid { width: 1279px; }
.dlggrid { width: 436px; }
.w31 { width: 31px; } .w33 { width: 33px; } .w36 { width: 36px; } .w38 { width: 38px; } .w39 { width: 39px; }
.w49 { width: 49px; } .w56 { width: 56px; } .w61 { width: 61px; } .w71 { width: 71px; } .w73 { width: 73px; }
.w74 { width: 74px; } .w81 { width: 81px; } .w156 { width: 156px; } .w166 { width: 166px; } .w201 { width: 201px; }

/* horizontal scroll bar */
.hscroll { height: 17px; flex: none; display: flex; gap: 1px; background: linear-gradient(#f3f1ec, #fefefb); }
.sbtn { width: 17px; border: 1px solid #fff; border-radius: 2px; background: #c4d4fa; color: #44597e; box-shadow: inset 0 0 0 1px #b0c4f2; }
.track { flex: 1; display: flex; }
.thumb { width: 77.2%; display: flex; align-items: center; justify-content: center; border: 1px solid #98b0e8; border-radius: 2px; background: linear-gradient(#cbdafc, #bccdf8); box-shadow: inset 0 0 0 1px #e8effe; }
.ridges { width: 8px; height: 6px; background: repeating-linear-gradient(90deg, #eef4fe 0 1px, #8caae4 1px 2px); }

/* trees */
.tree li { height: 16px; display: flex; align-items: center; white-space: nowrap; }
.tree .i { margin-right: 3px; }
.exp { width: 9px; height: 9px; margin-right: 7px; border: 1px solid #8494ac; border-radius: 1px; background: linear-gradient(#222, #222) 1px 3px / 5px 1px no-repeat #f2f0ea; }
.elbow { width: 12px; height: 16px; background: repeating-linear-gradient(#a0a0a0 0 1px, transparent 1px 2px) 0 0 / 1px 8px no-repeat, repeating-linear-gradient(90deg, #a0a0a0 0 1px, transparent 1px 2px) 0 8px / 100% 1px no-repeat; }
.side-tree .elbow { margin-left: 23px; }
.tree .sub .i { width: 14px; height: 14px; margin-right: 4px; }
.sel { height: 16px; padding: 0 5px 0 2px; line-height: 16px; color: #fff; background: #316ac5; }
.dlg-tree { width: 161px; flex: none; border: 1px solid #7f9db9; border-width: 1px 1px 1px 0; background: #fff; padding: 1px 0 0 9px; }
.trunk { width: 1px; height: 16px; margin: 0 18px 0 4px; background: repeating-linear-gradient(#a0a0a0 0 1px, transparent 1px 2px); }
.branch { width: 11px; height: 16px; margin: 0 1px 0 4px; background: repeating-linear-gradient(#a0a0a0 0 1px, transparent 1px 2px) 0 0 / 1px 100% no-repeat, repeating-linear-gradient(90deg, #a0a0a0 0 1px, transparent 1px 2px) 0 8px / 100% 1px no-repeat; }
.branch.end { background-size: 1px 8px, 100% 1px; }

/* status line */
.status { height: 21px; flex: none; display: flex; align-items: center; border-top: 2px solid #a8a698; background: linear-gradient(#f1efe2, #e8e5d2); padding-left: 1px; }
.status > span { height: 16px; }
.st1 { width: 147px; }
.st2 { width: 250px; padding-left: 2px; border-left: 1px solid #c5c2b2; }
.st3 { padding-left: 2px; border-left: 1px solid #c5c2b2; }

/* task bar */
.taskbar { height: 30px; flex: none; display: flex; align-items: center; color: #fff; background: linear-gradient(#1e50b8 0, #3f86ee 2px, #2c66e0 5px, #245bdc 15px, #2660de 26px, #1b42a4 100%); }
.start { width: 97px; height: 30px; flex: none; display: flex; align-items: center; gap: 6px; padding-left: 10px; border-radius: 0 9px 9px 0; font-size: 18px; line-height: 24px; font-style: italic; text-shadow: 1px 1px 2px #1a4a1a; background: linear-gradient(#2c7a2c 0, #6cb86c 3px, #3d963d 8px, #379437 22px, #2a702a 100%); box-shadow: inset -3px 0 4px #2a702a; }
.start svg { width: 20px; height: 20px; }
.quick { width: 141px; flex: none; display: flex; align-items: center; gap: 7px; padding-left: 51px; }
.more { margin: -12px 0 0 4px; font-size: 16px; color: #b8d0fc; }
.tasks { flex: 1; min-width: 0; display: flex; gap: 2px; }
.task { width: 158px; height: 23px; display: flex; align-items: center; gap: 4px; padding-left: 8px; border-radius: 2px; background: linear-gradient(#5c9cfa 0, #3c80f2 4px, #3a7cf2 18px, #3068d8 100%); }
.lang { display: flex; gap: 16px; margin-right: 15px; }
.tray { height: 30px; display: flex; align-items: center; gap: 2px; padding-right: 13px; border-left: 1px solid #0c4a90; background: linear-gradient(#1470c8 0, #1ca4f2 3px, #1290e8 12px, #1494ea 24px, #1070c4 100%); }
.tray time { margin-left: 6px; }
.hide { width: 18px; height: 18px; padding: 1px; margin-left: -9px; border-radius: 9px; background: radial-gradient(circle at 6px 5px, #7cc4fa, #1c78dc 75%); }

/* dialog */
.dialog { position: absolute; left: 249px; top: 167px; width: 688px; padding: 0 4px 4px; border-radius: 7px 7px 0 0; background: #6f80d8; box-shadow: inset 0 0 0 1px #5668c4; }
.dlg-title { height: 30px; margin: 0 -4px; padding: 3px 7px 0 6px; border-radius: 7px 7px 0 0; }
.dlg-body { background: #ece9d8; }
.dlg-tools { height: 26px; padding-left: 2px; background: linear-gradient(90deg, transparent, #ece6d0), linear-gradient(#f9f9f6, #e8e4d4); }
.dlg-tools .grip { margin-right: 2px; }
.panes { height: 396px; display: flex; gap: 3px; }
.dlg-sheet { flex: 1; background: #fff; border: 1px solid #7f9db9; padding: 1px 0 0 1px; }
.dlg-foot { height: 41px; display: flex; justify-content: flex-end; align-items: center; gap: 15px; padding-right: 13px; }
.push { width: 72px; height: 23px; border: 1px solid #003c74; border-radius: 3px; background: linear-gradient(#fff, #f4f3ee 80%, #dcd8cc); }
```
